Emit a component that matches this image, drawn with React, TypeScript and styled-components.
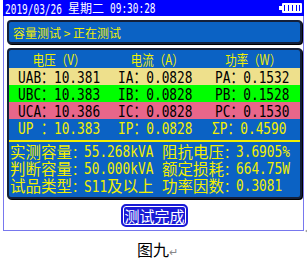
import React from 'react';
import styled, { createGlobalStyle } from 'styled-components';

const cjk = `"Noto Sans CJK SC", sans-serif`;
const mono = `"DejaVu Sans Mono", "Noto Sans CJK SC", monospace`;
const yellow = '#f2f000';
const panelBlue = '#0b62c4';

const GlobalStyle = createGlobalStyle`
  body {
    margin: 0;
    background: #fff;
    font-family: ${cjk};
  }
`;

const Page = styled.div`
  width: 307px;
  height: 260px;
  display: flex;
  flex-direction: column;
`;

const Screen = styled.div`
  position: relative;
  width: 301px;
  margin-left: 3px;
  display: flex;
  flex-direction: column;

  /* little anchor mark of the document the shot was taken from */
  &::after {
    content: '';
    position: absolute;
    right: -4px;
    bottom: -2px;
    border-style: solid;
    border-width: 2px 3px 2px 0;
    border-color: transparent #999 transparent transparent;
  }
`;

const StatusBar = styled.div`
  height: 16px;
  background: #0000ff;
  color: #fff;
  display: flex;
  align-items: center;
  justify-content: space-between;
  padding: 0 2px;
`;

const Clock = styled.div`
  display: flex;
  align-items: center;
  white-space: nowrap;
  line-height: 16px;
`;

// fixed-width slot for squeezed monospace text that sits before other text
const Slot = styled.span<{ $w: number }>`
  display: inline-block;
  width: ${(p) => p.$w}px;
  white-space: nowrap;
`;

// the LCD font is a tall, narrow bitmap font: squeeze a monospace face to match
const Squeeze = styled.span<{ $scale: number; $size: number }>`
  display: inline-block;
  font-family: ${mono};
  font-size: ${(p) => p.$size}px;
  transform: scaleX(${(p) => p.$scale});
  transform-origin: 0 50%;
  white-space: nowrap;
`;

const Weekday = styled.span`
  width: 42px;
  font-size: 12px;
`;

const Body = styled.div`
  box-sizing: border-box;
  height: 215px;
  border: 1px solid #7878ee;
  border-top: none;
  padding: 4px 1px 0 3px;
  display: flex;
  flex-direction: column;
`;

const Crumb = styled.div`
  box-sizing: border-box;
  height: 24px;
  background: ${panelBlue};
  border: 2px solid #14203a;
  border-radius: 4px;
  box-shadow: 1px 1px 0 #000;
  color: ${yellow};
  font-size: 12px;
  display: flex;
  align-items: center;
  padding-left: 4px;
`;

const Panel = styled.div`
  box-sizing: border-box;
  margin-top: 4px;
  height: 151px;
  background: ${panelBlue};
  border: 2px solid #14203a;
  border-radius: 4px;
  box-shadow: 1px 1px 0 #000;
  display: flex;
  flex-direction: column;
`;

const Grid = styled.div<{ $bg?: string; $fg?: string; $h?: number }>`
  display: grid;
  grid-template-columns: 100px 97px 1fr;
  height: ${(p) => p.$h ?? 17}px;
  align-items: center;
  background: ${(p) => p.$bg ?? 'transparent'};
  color: ${(p) => p.$fg ?? yellow};
  line-height: 17px;
  white-space: nowrap;
`;

const HeadCell = styled.div`
  text-align: center;
`;

const HeadText = styled.span`
  display: inline-block;
  font-size: 14px;
  transform: scaleX(0.82);
`;

const Cell = styled.div<{ $indent?: number }>`
  padding-left: ${(p) => p.$indent ?? 9}px;
`;

const Rule = styled.div`
  height: 2px;
  margin-top: 4px;
  background: ${yellow};
`;

const InfoGrid = styled.div`
  display: grid;
  grid-template-columns: 152px 1fr;
  grid-auto-rows: 17px;
  align-items: center;
  padding: 1px 0 0 1px;
  color: ${yellow};
  line-height: 17px;
  white-space: nowrap;
`;

const InfoItem = styled.div`
  display: flex;
  align-items: center;
`;

const InfoLabel = styled.span`
  font-size: 15.5px;
`;

const Colon = styled.span`
  display: inline-block;
  width: 12px;
  font-size: 13px;
`;

const Plain = styled.span`
  font-size: 15.5px;
`;

const DoneButton = styled.div`
  align-self: center;
  margin-top: 5px;
  width: 67px;
  height: 23px;
  box-sizing: border-box;
  border: 2px solid #1a1ad6;
  border-radius: 5px;
  background: #1a1ad6;
  box-shadow: inset 0 0 0 1px #fff;
  color: #fff;
  font-size: 15px;
  line-height: 19px;
  display: flex;
  align-items: center;
  justify-content: center;
`;

const Caption = styled.div`
  margin-top: 10px;
  text-align: center;
  font-size: 16px;
  line-height: 16px;
  color: #000;
  padding-left: 8px;
`;

const Return = styled.span`
  font-size: 11px;
  color: #888;
`;

const Battery = () => (
  <svg width="23" height="10" viewBox="0 0 23 10">
    <rect x="0" y="3" width="3" height="4" fill="#fff" />
    <rect x="3" y="0" width="20" height="10" rx="1" fill="#fff" />
    <rect x="5" y="2" width="16" height="6" fill="#0000ff" />
    <rect x="6" y="2" width="3" height="6" fill="#fff" />
    <rect x="10" y="2" width="3" height="6" fill="#fff" />
    <rect x="14" y="2" width="3" height="6" fill="#fff" />
    <rect x="18" y="2" width="2" height="6" fill="#fff" />
  </svg>
);

const LCD = 0.8; // 16px DejaVu Sans Mono -> 7.7px cells

const rows = [
  { bg: '#eee08c', fg: '#000', cells: ['UAB：10.381', 'IA：0.0828', 'PA：0.1532'] },
  { bg: '#00ff00', fg: '#000', cells: ['UBC：10.383', 'IB：0.0828', 'PB：0.1528'] },
  { bg: '#e8668a', fg: '#000', cells: ['UCA：10.386', 'IC：0.0828', 'PC：0.1530'] },
  { bg: undefined, fg: yellow, cells: ['UP ：10.383', 'IP：0.0828', 'ΣP：0.4590'] },
];

type Info = { label: string; value: string; tail?: string };

const info: Info[] = [
  { label: '实测容量', value: '55.268kVA' },
  { label: '阻抗电压', value: '3.6905%' },
  { label: '判断容量', value: '50.000kVA' },
  { label: '额定损耗', value: '664.75W' },
  { label: '试品类型', value: 'S11', tail: '及以上' },
  { label: '功率因数', value: '0.3081' },
];

export default function App() {
  return (
    <Page>
      <GlobalStyle />
      <Screen>
        <StatusBar>
          <Clock>
            <Slot $w={63}>
              <Squeeze $size={13.5} $scale={0.7}>2019/03/26</Squeeze>
            </Slot>
            <Weekday>星期二</Weekday>
            <Squeeze $size={13.5} $scale={0.7}>09:30:28</Squeeze>
          </Clock>
          <Battery />
        </StatusBar>
        <Body>
          <Crumb>容量测试 &gt; 正在测试</Crumb>
          <Panel>
            <Grid $h={18}>
              <HeadCell><HeadText>电压（V）</HeadText></HeadCell>
              <HeadCell><HeadText>电流（A）</HeadText></HeadCell>
              <HeadCell><HeadText>功率（W）</HeadText></HeadCell>
            </Grid>
            {rows.map((r) => (
              <Grid key={r.cells[0]} $bg={r.bg} $fg={r.fg}>
                {r.cells.map((c) => (
                  <Cell key={c} $indent={c.startsWith('Σ') ? 6 : 9}>
                    <Squeeze $size={16} $scale={LCD}>{c}</Squeeze>
                  </Cell>
                ))}
              </Grid>
            ))}
            <Rule />
            <InfoGrid>
              {info.map((t) => (
                <InfoItem key={t.label}>
                  <InfoLabel>{t.label}</InfoLabel>
                  <Colon>：</Colon>
                  {t.tail ? (
                    <>
                      <Slot $w={t.value.length * 7.7}>
                        <Squeeze $size={16} $scale={LCD}>{t.value}</Squeeze>
                      </Slot>
                      <Plain>{t.tail}</Plain>
                    </>
                  ) : (
                    <Squeeze $size={16} $scale={LCD}>{t.value}</Squeeze>
                  )}
                </InfoItem>
              ))}
            </InfoGrid>
          </Panel>
          <DoneButton>测试完成</DoneButton>
        </Body>
      </Screen>
      <Caption>
        图九<Return>↵</Return>
      </Caption>
    </Page>
  );
}
